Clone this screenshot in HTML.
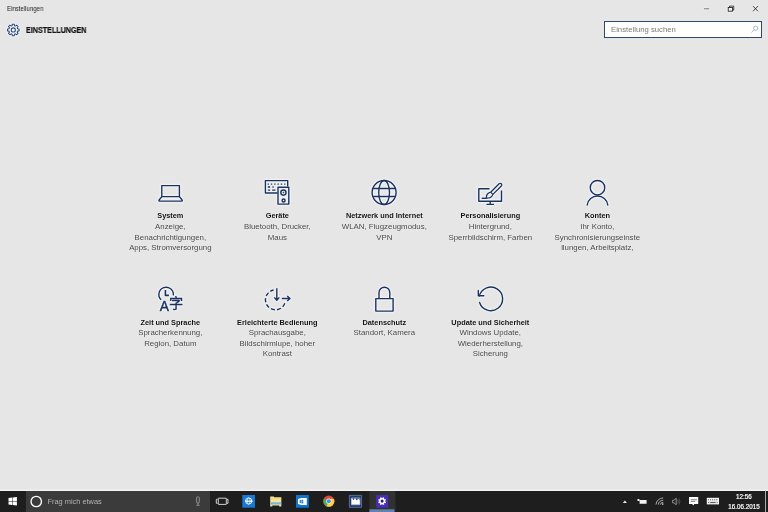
<!DOCTYPE html>
<html lang="de">
<head>
<meta charset="utf-8">
<title>Einstellungen</title>
<style>
*{margin:0;padding:0;box-sizing:border-box}
html,body{width:768px;height:512px;overflow:hidden;background:#e6e6e6;font-family:"Liberation Sans","Noto Sans CJK SC",sans-serif;}
body{position:relative}
.abs{position:absolute;will-change:transform}
#wtitle{left:6.8px;top:4.4px;font-size:7px;color:#1c1c1c;line-height:9px;white-space:nowrap;transform:scaleX(.865);transform-origin:0 0}
#htitle{left:25.6px;top:24.9px;font-size:8.7px;font-weight:bold;color:#111;line-height:10px;white-space:nowrap;transform:scaleX(0.825);transform-origin:0 0;-webkit-text-stroke:0.2px #111}
#search{left:604px;top:21.1px;width:157.6px;height:16.9px;background:#fff;border:1px solid #30486e}
#search span{position:absolute;left:5.7px;top:3.2px;font-size:8px;transform:scaleX(.965);transform-origin:0 0;line-height:9px;color:#7a7a7a;white-space:nowrap}
.tile{position:absolute;width:106.67px;text-align:center}
.tile{text-shadow:0 0 1.2px rgba(255,255,255,.9);will-change:transform}
.tile h3{position:absolute;left:-10px;right:-10px;top:0;font-size:7.8px;transform:scaleX(.942);line-height:10px;font-weight:bold;color:#101010;white-space:nowrap}
.tile.r2 h3{top:.6px}
.tile p{position:absolute;left:0;right:0;top:11.3px;font-size:7.85px;line-height:10.5px;color:#464646;white-space:nowrap}
#taskbar{left:0;top:490.8px;width:768px;height:21.2px;background:#1e1e1e}
#tbhalo{left:0;top:488.6px;width:768px;height:2.2px;background:linear-gradient(#e6e6e6,#f7f7f7)}
#tsearch{left:25.6px;top:0;width:183.5px;height:21.2px;background:#3b3b3b}
#tsearch span{position:absolute;left:21.5px;top:6.3px;font-size:7.4px;line-height:9px;color:#b4b4b4;white-space:nowrap}
#clock{right:7.6px;top:1.1px;width:32px;text-align:center;font-size:6.3px;line-height:9.7px;color:#fff;white-space:nowrap;-webkit-text-stroke:0.2px #fff}
svg{position:absolute;left:0;top:0;overflow:visible}
</style>
</head>
<body>
<div id="wtitle" class="abs">Einstellungen</div>
<div id="htitle" class="abs">EINSTELLUNGEN</div>
<div id="search" class="abs"><span>Einstellung suchen</span></div>

<!-- tiles text -->
<div class="tile" style="left:117.2px;top:210.5px"><h3>System</h3><p>Anzeige,<br>Benachrichtigungen,<br>Apps, Stromversorgung</p></div>
<div class="tile" style="left:223.9px;top:210.5px"><h3>Geräte</h3><p>Bluetooth, Drucker,<br>Maus</p></div>
<div class="tile" style="left:330.6px;top:210.5px"><h3>Netzwerk und Internet</h3><p>WLAN, Flugzeugmodus,<br>VPN</p></div>
<div class="tile" style="left:437.2px;top:210.5px"><h3>Personalisierung</h3><p>Hintergrund,<br>Sperrbildschirm, Farben</p></div>
<div class="tile" style="left:543.9px;top:210.5px"><h3>Konten</h3><p>Ihr Konto,<br>Synchronisierungseinste<br>llungen, Arbeitsplatz,</p></div>

<div class="tile r2" style="left:117.2px;top:317.2px"><h3>Zeit und Sprache</h3><p>Spracherkennung,<br>Region, Datum</p></div>
<div class="tile r2" style="left:223.9px;top:317.2px"><h3>Erleichterte Bedienung</h3><p>Sprachausgabe,<br>Bildschirmlupe, hoher<br>Kontrast</p></div>
<div class="tile r2" style="left:330.6px;top:317.2px"><h3>Datenschutz</h3><p>Standort, Kamera</p></div>
<div class="tile r2" style="left:437.2px;top:317.2px"><h3>Update und Sicherheit</h3><p>Windows Update,<br>Wiederherstellung,<br>Sicherung</p></div>

<div id="tbhalo" class="abs"></div>
<div id="taskbar" class="abs">
  <div id="tsearch" class="abs"><span>Frag mich etwas</span></div>
  <div id="clock" class="abs">12:56<br>16.06.2015</div>
</div>
<!-- icons -->
<svg width="768" height="512" viewBox="0 0 768 512" fill="none" stroke="#193260" stroke-width="1.4" stroke-linejoin="round">
<g id="mainicons" style="filter:drop-shadow(0 0 0.9px rgba(255,255,255,.95)) drop-shadow(0 0 0.5px rgba(255,255,255,.8))">
<!-- ICONS-START -->
<!-- System: laptop -->
<g>
<rect x="161.8" y="185.6" width="17.6" height="11"/>
<path d="M161.8 196.6 L159.1 200 Q158.5 201.1 159.9 201.1 L181.3 201.1 Q182.7 201.1 182.1 200 L179.4 196.6"/>
</g>
<!-- Geraete: keyboard + speaker -->
<g>
<path d="M277.6 193 L265.4 193 L265.4 180.6 L287.7 180.6 L287.7 186.6"/>
<rect x="278" y="187.2" width="10.8" height="16.9" fill="#eef0f4"/>
<circle cx="283.4" cy="192.6" r="2.6"/>
<circle cx="283.4" cy="192.6" r="0.5" fill="#193260" stroke-width="0.6"/>
<circle cx="283.6" cy="200.5" r="1.5"/>
<path d="M267.6 184.1 h1.3 m2 0 h1.3 m2 0 h1.3 m2 0 h1.3 m2 0 h1.3 m2 0 h1.3  M267.8 187 h2.4 m2.2 0 h1.3  M267.8 190.2 h2.4 m1.9 0 h3.4" stroke-width="1.3"/>
</g>
<!-- Netzwerk: globe -->
<g>
<circle cx="384.1" cy="192.5" r="12"/>
<ellipse cx="384.1" cy="192.5" rx="5.4" ry="12"/>
<path d="M373.2 188.5 H395 M373.2 196.5 H395"/>
</g>
<!-- Personalisierung -->
<g>
<path d="M489.5 188.7 L478.8 188.7 L478.8 201.2 L501.5 201.2 L501.5 190.5"/>
<path d="M490.2 201.2 V204.4 M486.4 204.4 H494"/>
<path d="M481.6 198.3 H486.5"/>
<path d="M490.7 192.2 L499.1 183.8 A1.55 1.55 0 0 1 501.3 186 L492.9 194.4 Q491.6 198.4 486.4 198.2 Q486 193.4 490.7 192.2 Z" stroke-width="1.3"/>
<path d="M490.7 192.2 L492.9 194.4" stroke-width="1.1"/>
</g>
<!-- Konten -->
<g>
<circle cx="597.5" cy="187.7" r="7.25"/>
<path d="M587.2 205 A10.4 10.4 0 0 1 607.8 205" stroke-linecap="round"/>
</g>
<!-- Zeit und Sprache -->
<g>
<path d="M173.3 295.38 A7.25 7.25 0 1 0 161.16 299.8" />
<path d="M165.4 290.1 V295.4 H168.9" stroke-width="1.6"/>
</g>
<!-- Erleichterte Bedienung -->
<g>
<path d="M273.6 290 A10 10 0 1 0 285.3 301.6" stroke-dasharray="4.1 2.2" stroke-dashoffset="0.5"/>
<path d="M276.8 288.2 V300 M274.3 297.4 L276.8 300.2 L279.3 297.4"/>
<path d="M281.8 298.5 H289.8 M287.2 295.9 L290 298.5 L287.2 301.1"/>
</g>
<!-- Datenschutz -->
<g>
<rect x="375.8" y="298.6" width="17.3" height="12.5"/>
<path d="M379 298.6 V292.6 A5.4 5.4 0 0 1 389.8 292.6 V298.6"/>
</g>
<!-- Update -->
<g>
<path d="M479.4 295.9 A11.8 11.8 0 1 1 479.58 302.45" stroke-linecap="round"/>
<path d="M478.3 290.4 V295.8 H483.8" stroke-linecap="round"/>
</g>
<!-- header gear -->
<g stroke="#2a4a7c"><path d="M17.59 28.76 L19.07 28.96 L19.07 30.94 L17.59 31.14 L17.17 32.14 L18.08 33.33 L16.68 34.73 L15.49 33.82 L14.49 34.24 L14.29 35.72 L12.31 35.72 L12.11 34.24 L11.11 33.82 L9.92 34.73 L8.52 33.33 L9.43 32.14 L9.01 31.14 L7.53 30.94 L7.53 28.96 L9.01 28.76 L9.43 27.76 L8.52 26.57 L9.92 25.17 L11.11 26.08 L12.11 25.66 L12.31 24.18 L14.29 24.18 L14.49 25.66 L15.49 26.08 L16.68 25.17 L18.08 26.57 L17.17 27.76 Z" stroke-width="1.05" stroke-linejoin="round"/>
<circle cx="13.3" cy="29.95" r="2.1" stroke-width="1.05"/></g>
<!-- window controls -->
<g stroke="#555" stroke-width="0.8"><path d="M704 8.8 H709.2"/></g>
<g stroke="#1a1a1a" stroke-width="0.85" stroke-linejoin="miter"><path d="M729.5 7.3 V6.1 H733.8 V10.1 H732.7"/><rect x="728.2" y="7.5" width="4.3" height="3.7"/></g>
<g stroke="#222" stroke-width="0.9"><path d="M753 6.1 L758 11.3 M758 6.1 L753 11.3"/></g>
<!-- search magnifier -->
<g stroke="#939db0" stroke-width="0.75"><circle cx="755.6" cy="28.2" r="2.1"/><path d="M754.1 29.8 L751.4 32.4"/></g>
<!-- A and zi -->
<text x="159.7" y="311.4" font-size="14.6" fill="#193260" stroke="#193260" stroke-width="0.45" textLength="9.2" lengthAdjust="spacingAndGlyphs">A</text>
<text x="169.1" y="308.4" font-size="14.2" fill="#193260" stroke="#193260" stroke-width="0.35" font-family="'Noto Sans CJK SC','Noto Sans CJK JP',sans-serif">字</text>
<!-- ICONS-END -->
</g>
<!-- TASKBAR-START -->
<g stroke="none">
<!-- windows logo -->
<path fill="#fff" d="M8.5 498.1 L12 497.6 V501 H8.5 Z M8.5 501.5 H12 V504.9 L8.5 504.4 Z M12.5 497.5 L16.9 496.9 V501 H12.5 Z M12.5 501.5 H16.9 V505.6 L12.5 505 Z"/>
<!-- cortana -->
<circle cx="36.25" cy="501.5" r="5.2" fill="none" stroke="#fff" stroke-width="1.35"/>
<!-- mic -->
<g fill="none" stroke="#9a9a9a" stroke-width="0.9"><rect x="196.6" y="496.9" width="2.7" height="6" rx="0.9"/><path d="M198 503 V505.2 M196.4 505.3 H199.6"/></g>
<!-- task view -->
<g fill="none" stroke="#e4e4e4" stroke-width="0.9"><rect x="218.3" y="498.2" width="8" height="6.2" rx="0.3"/><path d="M217.6 499.3 H216.3 V503.3 H217.6 M227 499.3 H228 V503.3 H227"/></g>
<!-- IE tile -->
<rect x="242.3" y="495" width="12.7" height="12.7" fill="#1878d2"/>
<g fill="none" stroke="#fff" stroke-width="0.9"><circle cx="248.7" cy="501" r="3.1"/><ellipse cx="248.7" cy="501" rx="1.3" ry="3.1" stroke-width="0.6"/><path d="M245 501.2 H252.6" stroke-width="1.2"/></g>
<!-- folder -->
<path fill="#f7e29a" d="M270.2 496.4 H273.6 L274.4 497.2 H281.3 V506.6 H279.2 V505.4 H272.3 V506.6 H270.2 Z"/>
<path fill="#f2cf6a" d="M270.2 498.4 H281.3 V499.2 H270.2 Z"/>
<rect x="270.2" y="502.3" width="11.1" height="2.2" fill="#72b9dc"/>
<!-- store tile -->
<rect x="296" y="495" width="12.8" height="12.7" fill="#0f75cd"/>
<path fill="#fff" d="M298 499 L301.4 497.9 H306.8 V505 H301.4 L298 504 Z"/>
<path fill="#0f75cd" d="M299.6 500.3 L301 500.1 V501.4 H299.6 Z M299.6 501.8 H301 V503.1 L299.6 502.9 Z M301.4 500 L303.2 499.7 V501.4 H301.4 Z M301.4 501.8 H303.2 V503.5 L301.4 503.2 Z"/>
<!-- chrome -->
<g>
<circle cx="328.8" cy="501.2" r="5.6" fill="#dd4b3e"/>
<path fill="#4caf50" d="M328.8 501.2 L323.95 498.4 A5.6 5.6 0 0 0 328.8 506.8 L331.6 502 Z"/>
<path fill="#fdd13a" d="M328.8 501.2 L334.4 501.2 A5.6 5.6 0 0 1 328.8 506.8 L326.4 506.2 L331.2 498.6 L334.1 499.3 A5.6 5.6 0 0 1 334.4 501.2 Z"/>
<circle cx="328.8" cy="501.2" r="2.6" fill="#f3f3f3"/>
<circle cx="328.8" cy="501.2" r="2" fill="#4a8af4"/>
</g>
<!-- photos -->
<rect x="349.4" y="495.4" width="12.2" height="11.9" fill="#1e3a6e" stroke="#5a74a4" stroke-width="0.9"/>
<path fill="#fff" d="M351.6 504.6 V498.4 H352.4 L353.6 500.2 L355 498 L356.8 500.6 L358.2 498.6 L359.8 500.2 V504.6 Z"/>
<path fill="none" stroke="#fff" stroke-width="0.5" d="M351.5 498 H359.9 V504.7 H351.5 Z"/>
<!-- settings active -->
<rect x="369.4" y="491" width="26" height="21" fill="#313131"/>
<rect x="369.4" y="509.3" width="25" height="2.7" fill="#6183b3"/>
<rect x="376.2" y="495" width="12" height="12.7" fill="#4a2db4"/>
<path fill="#fff" d="M384.99 501.37 L386.02 501.91 L385.44 503.30 L384.33 502.95 L383.95 503.33 L384.30 504.44 L382.91 505.02 L382.37 503.99 L381.83 503.99 L381.29 505.02 L379.90 504.44 L380.25 503.33 L379.87 502.95 L378.76 503.30 L378.18 501.91 L379.21 501.37 L379.21 500.83 L378.18 500.29 L378.76 498.90 L379.87 499.25 L380.25 498.87 L379.90 497.76 L381.29 497.18 L381.83 498.21 L382.37 498.21 L382.91 497.18 L384.30 497.76 L383.95 498.87 L384.33 499.25 L385.44 498.90 L386.02 500.29 L384.99 500.83 Z"/>
<circle cx="382.1" cy="501.1" r="1.55" fill="#2c1a78"/>
<!-- tray -->
<path fill="#f0f0f0" d="M622.9 503 L624.9 500.4 L626.9 503 Z"/>
<!-- battery/plug -->
<path fill="#f2f2f2" d="M639.6 499.9 H646.6 V503.7 H639.6 Z M637.5 498.9 H639.4 V501 H637.5 Z"/>
<!-- wifi -->
<g fill="none" stroke="#cfcfcf" stroke-width="0.8"><path d="M656 504.6 A7 7 0 0 1 663.2 498 M658.3 504.6 A4.7 4.7 0 0 1 663.2 500.3 M660.4 504.6 A2.6 2.6 0 0 1 663.2 502.4"/></g>
<rect x="662" y="503.4" width="1.4" height="1.4" fill="#cfcfcf"/>
<!-- volume -->
<path fill="none" stroke="#bdbdbd" stroke-width="0.7" d="M672.6 500.2 H674 L676.2 498.2 V504.8 L674 502.8 H672.6 Z"/>
<path fill="none" stroke="#6a6a6a" stroke-width="0.7" d="M677.6 499.6 Q678.8 501.5 677.6 503.4 M679 498.6 Q680.8 501.5 679 504.4"/>
<!-- notification -->
<path fill="#fafafa" d="M689 497 H698.2 V503.9 H694.4 L693.2 505.5 L692.2 503.9 H689 Z"/>
<path stroke="#555" stroke-width="0.7" d="M690.8 499.7 H697 M690.8 501.4 H695.2"/>
<!-- keyboard -->
<rect x="706.8" y="497.8" width="12.2" height="6.6" fill="#f4f4f4"/>
<path stroke="#1e1e1e" stroke-width="0.9" stroke-dasharray="0.8 1.1" d="M708.2 499.8 H718"/>
<path stroke="#1e1e1e" stroke-width="0.8" d="M708.2 502.6 H709.2 M710.2 502.6 H715.6 M716.6 502.6 H717.6"/>
<path stroke="#9a9a9a" stroke-width="0.5" stroke-dasharray="0.8 1.1" d="M708.8 501.2 H717.6"/>
<!-- show desktop -->
<rect x="765.1" y="490" width="0.8" height="22" fill="#cdcdcd"/>
</g>
<!-- TASKBAR-END -->

</svg>

</body>
</html>
